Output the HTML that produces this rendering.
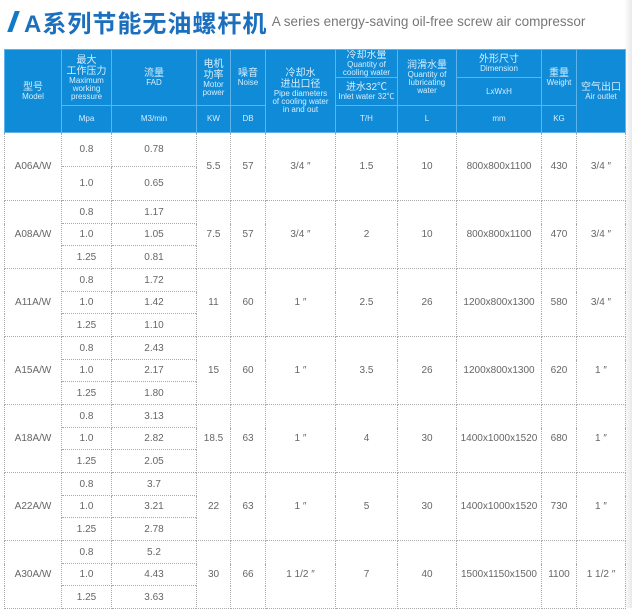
<!DOCTYPE html>
<html><head><meta charset="utf-8"><style>
body{margin:0;width:632px;height:608px;overflow:hidden;background:#fff;position:relative;font-family:"Liberation Sans","Noto Sans CJK SC",sans-serif}
.edge{position:absolute;right:0;top:0;width:8px;height:608px;background:linear-gradient(to right,#fff,#e9e9e9)}
.title{position:absolute;left:6px;top:4px;height:30px;white-space:nowrap}
.sl{display:inline-block;width:5px;height:21px;background:#1179c9;transform:skewX(-20deg);vertical-align:middle;margin:0 8px 0 5px}
.cn{font-size:24px;font-weight:bold;color:#1b6fbd;vertical-align:middle;letter-spacing:1px}
.en{font-size:13.5px;color:#777;vertical-align:middle}
table{position:absolute;left:4px;top:49px;border-collapse:collapse;table-layout:fixed;width:621px}
th{background:#0f8bd8;color:#d8eefc;font-weight:normal;border:1px solid #5db4ea;font-size:8px;line-height:8px;padding:0;text-align:center;overflow:hidden;white-space:nowrap}
th .c{font-size:10px;line-height:11px}
td{color:#666;font-size:10px;text-align:center;padding:0;border:1px dotted #aaa}
tbody tr:first-child td{border-top:none}
</style></head><body>
<div class="edge"></div>
<div class="title"><span class="sl"></span><span class="cn">A系列节能无油螺杆机</span> <span class="en">A series energy-saving oil-free screw air compressor</span></div>
<table>
<colgroup><col style="width:57px"><col style="width:50px"><col style="width:85px"><col style="width:34px"><col style="width:35px"><col style="width:70px"><col style="width:62px"><col style="width:59px"><col style="width:85px"><col style="width:35px"><col style="width:49px"></colgroup>
<thead>
<tr style="height:28px"><th rowspan="3"><span class="c">型号</span><br>Model</th><th rowspan="2"><span class="c">最大<br>工作压力</span><br>Maximum<br>working<br>pressure</th><th rowspan="2"><span class="c">流量</span><br>FAD</th><th rowspan="2"><span class="c">电机<br>功率</span><br>Motor<br>power</th><th rowspan="2"><span class="c">噪音</span><br>Noise</th><th rowspan="3"><span class="c">冷却水<br>进出口径</span><br>Pipe diameters<br>of cooling water<br>in and out</th><th><span class="c">冷却水量</span><br>Quantity of<br>cooling water</th><th rowspan="2"><span class="c">润滑水量</span><br>Quantity of<br>lubricating<br>water</th><th><span class="c">外形尺寸</span><br>Dimension</th><th rowspan="2"><span class="c">重量</span><br>Weight</th><th rowspan="3"><span class="c">空气出口</span><br>Air outlet</th></tr>
<tr style="height:28px"><th><span class="c">进水32℃</span><br>Inlet water 32℃</th><th>LxWxH</th></tr>
<tr style="height:27px"><th>Mpa</th><th>M3/min</th><th>KW</th><th>DB</th><th>T/H</th><th>L</th><th>mm</th><th>KG</th></tr>
</thead>
<tbody>
<tr style="height:34px"><td rowspan="2">A06A/W</td><td>0.8</td><td>0.78</td><td rowspan="2">5.5</td><td rowspan="2">57</td><td rowspan="2">3/4 ″</td><td rowspan="2">1.5</td><td rowspan="2">10</td><td rowspan="2">800x800x1100</td><td rowspan="2">430</td><td rowspan="2">3/4 ″</td></tr>
<tr style="height:34px"><td>1.0</td><td>0.65</td></tr>
<tr style="height:23px"><td rowspan="3">A08A/W</td><td>0.8</td><td>1.17</td><td rowspan="3">7.5</td><td rowspan="3">57</td><td rowspan="3">3/4 ″</td><td rowspan="3">2</td><td rowspan="3">10</td><td rowspan="3">800x800x1100</td><td rowspan="3">470</td><td rowspan="3">3/4 ″</td></tr>
<tr style="height:22px"><td>1.0</td><td>1.05</td></tr><tr style="height:23px"><td>1.25</td><td>0.81</td></tr>
<tr style="height:23px"><td rowspan="3">A11A/W</td><td>0.8</td><td>1.72</td><td rowspan="3">11</td><td rowspan="3">60</td><td rowspan="3">1 ″</td><td rowspan="3">2.5</td><td rowspan="3">26</td><td rowspan="3">1200x800x1300</td><td rowspan="3">580</td><td rowspan="3">3/4 ″</td></tr>
<tr style="height:22px"><td>1.0</td><td>1.42</td></tr><tr style="height:23px"><td>1.25</td><td>1.10</td></tr>
<tr style="height:23px"><td rowspan="3">A15A/W</td><td>0.8</td><td>2.43</td><td rowspan="3">15</td><td rowspan="3">60</td><td rowspan="3">1 ″</td><td rowspan="3">3.5</td><td rowspan="3">26</td><td rowspan="3">1200x800x1300</td><td rowspan="3">620</td><td rowspan="3">1 ″</td></tr>
<tr style="height:22px"><td>1.0</td><td>2.17</td></tr><tr style="height:23px"><td>1.25</td><td>1.80</td></tr>
<tr style="height:23px"><td rowspan="3">A18A/W</td><td>0.8</td><td>3.13</td><td rowspan="3">18.5</td><td rowspan="3">63</td><td rowspan="3">1 ″</td><td rowspan="3">4</td><td rowspan="3">30</td><td rowspan="3">1400x1000x1520</td><td rowspan="3">680</td><td rowspan="3">1 ″</td></tr>
<tr style="height:22px"><td>1.0</td><td>2.82</td></tr><tr style="height:23px"><td>1.25</td><td>2.05</td></tr>
<tr style="height:23px"><td rowspan="3">A22A/W</td><td>0.8</td><td>3.7</td><td rowspan="3">22</td><td rowspan="3">63</td><td rowspan="3">1 ″</td><td rowspan="3">5</td><td rowspan="3">30</td><td rowspan="3">1400x1000x1520</td><td rowspan="3">730</td><td rowspan="3">1 ″</td></tr>
<tr style="height:22px"><td>1.0</td><td>3.21</td></tr><tr style="height:23px"><td>1.25</td><td>2.78</td></tr>
<tr style="height:23px"><td rowspan="3">A30A/W</td><td>0.8</td><td>5.2</td><td rowspan="3">30</td><td rowspan="3">66</td><td rowspan="3">1 1/2 ″</td><td rowspan="3">7</td><td rowspan="3">40</td><td rowspan="3">1500x1150x1500</td><td rowspan="3">1100</td><td rowspan="3">1 1/2 ″</td></tr>
<tr style="height:22px"><td>1.0</td><td>4.43</td></tr><tr style="height:23px"><td>1.25</td><td>3.63</td></tr>
</tbody></table>
</body></html>
